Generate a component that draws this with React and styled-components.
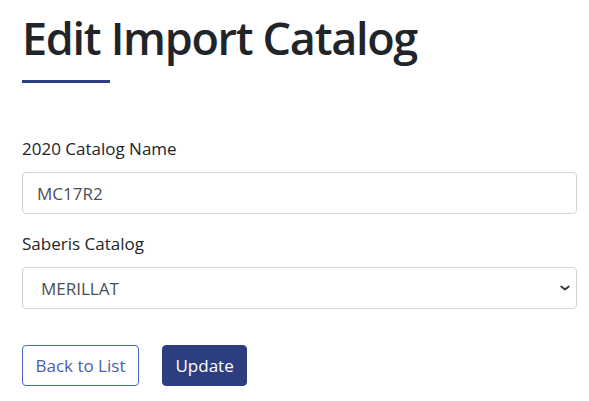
import React from 'react'
import styled, { createGlobalStyle } from 'styled-components'

const Global = createGlobalStyle`
    body {
        margin: 0;
        background: #fff;
        font-family: "Open Sans", "Noto Sans", sans-serif;
        color: #212529;
    }
`

const Page = styled.div`
    padding: 10px 12px 0 22px;
    width: 555px;
`

const Title = styled.h1`
    margin: 0;
    font-size: 45px;
    font-weight: 600;
    line-height: 56px;
    letter-spacing: -1.3px;
`

const Rule = styled.div`
    width: 88px;
    height: 3px;
    background: #2c3e80;
    margin-top: 14px;
    margin-bottom: 54px;
`

const Field = styled.div`
    margin-bottom: 18px;
`

const Label = styled.label`
    display: block;
    font-size: 17px;
    line-height: 24px;
    margin-bottom: 11px;
`

const Input = styled.input`
    box-sizing: border-box;
    width: 100%;
    height: 42px;
    padding: 0 14px;
    font-family: inherit;
    font-size: 17px;
    color: #495057;
    border: 1px solid #ced4da;
    border-radius: 4px;
    outline: none;
`

const Select = styled.select`
    box-sizing: border-box;
    width: 100%;
    height: 42px;
    padding: 0 14px 0 18px;
    font-family: inherit;
    font-size: 17px;
    color: #495057;
    background: #fff;
    border: 1px solid #ced4da;
    border-radius: 4px;
    appearance: none;
    outline: none;
    background-image: url("data:image/svg+xml,%3csvg xmlns='http://www.w3.org/2000/svg' viewBox='0 0 16 16'%3e%3cpath fill='none' stroke='%23343a40' stroke-linecap='round' stroke-linejoin='round' stroke-width='2.5' d='M3 6l5 4 5-4'/%3e%3c/svg%3e");
    background-repeat: no-repeat;
    background-position: right 5px center;
    background-size: 12px 12px;
`

const Actions = styled.div`
    display: flex;
    gap: 23px;
    margin-top: 36px;
`

const Button = styled.button`
    height: 41px;
    padding: 0 12.5px;
    font-family: inherit;
    font-size: 17px;
    border-radius: 4px;
    border: 1px solid ${p => p.primary ? '#2c3e80' : '#4466c8'};
    background: ${p => p.primary ? '#2c3e80' : '#fff'};
    color: ${p => p.primary ? '#fff' : '#4a5db0'};
    cursor: pointer;
`

export default function App() {
    return (
        <Page>
            <Global />
            <Title>Edit Import Catalog</Title>
            <Rule />
            <Field>
                <Label>2020 Catalog Name</Label>
                <Input defaultValue="MC17R2" />
            </Field>
            <Field>
                <Label>Saberis Catalog</Label>
                <Select defaultValue="MERILLAT">
                    <option>MERILLAT</option>
                </Select>
            </Field>
            <Actions>
                <Button>Back to List</Button>
                <Button primary>Update</Button>
            </Actions>
        </Page>
    )
}
